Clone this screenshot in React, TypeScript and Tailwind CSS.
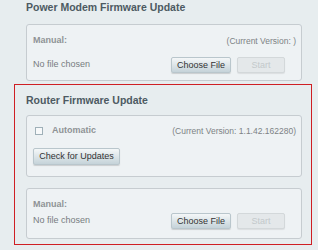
import React from 'react';

const font = { fontFamily: '"Liberation Sans", Arial, sans-serif' };

const Btn: React.FC<{ label: string; disabled?: boolean; className?: string }> = ({ label, disabled, className = '' }) => (
  <button
    className={`h-[16px] rounded-[2px] border text-[9px] leading-none ${
      disabled
        ? 'border-[#d3d8da] bg-[#e4e8ea] text-[#c3c8cb] shadow-[0_1px_1px_rgba(0,0,0,0.08)]'
        : 'border-[#b9c6cc] bg-gradient-to-b from-[#f4f7f8] to-[#c5d3d9] text-[#333] shadow-[0_1px_1px_rgba(0,0,0,0.15)]'
    } ${className}`}
  >
    {label}
  </button>
);

const ManualBox: React.FC<{ version?: string; tight?: boolean }> = ({ version, tight }) => (
  <div className={`rounded-[3px] border border-[#c6ccd0] bg-[#eef2f4] pl-[6px] pr-[5px] ${tight ? 'h-[51px] pt-[10px]' : 'h-[57px] pt-[10px]'}`}>
    <div className="flex items-center justify-between h-[12px]">
      <span className="text-[9px] font-bold text-[#8e9396]">Manual:</span>
      {version !== undefined && <span className="text-[8.5px] text-[#7d8285]">{version}</span>}
    </div>
    <div className={`flex items-center ${tight ? 'mt-[2px]' : 'mt-[10px]'}`}>
      <span className="text-[9px] text-[#777c80]">No file chosen</span>
      <Btn label="Choose File" className="ml-auto w-[60px]" />
      <Btn label="Start" disabled className="ml-[6px] mr-[11px] w-[48px]" />
    </div>
  </div>
);

export default function App() {
  return (
    <div style={font} className="w-[318px] h-[250px] overflow-hidden bg-[#e7edef]">
      <div className="pl-[26px] pr-[16px]">
        <div className="h-[14px] text-[10.5px] font-bold leading-[14px] text-[#4d5a62]">Power Modem Firmware Update</div>
        <div className="mt-[10px]">
          <ManualBox version="(Current Version: )" />
        </div>
      </div>

      <div className="mt-[3px] ml-[14px] w-[298px] h-[161px] border border-[#cf1f24] pl-[11px] pr-[9px]">
        <div className="pt-[8px] h-[14px] box-content text-[10.5px] font-bold leading-[14px] text-[#4d5a62]">Router Firmware Update</div>
        <div className="mt-[8px] h-[62px] rounded-[3px] border border-[#c6ccd0] bg-[#eef2f4] pl-[8px] pr-[5px] pt-[11px]">
          <div className="flex items-center h-[8px]">
            <span className="w-[8px] h-[8px] border border-[#9fb0b8] bg-[#f7f9fa]" />
            <span className="ml-[9px] text-[9px] font-bold text-[#8e9396]">Automatic</span>
            <span className="ml-auto text-[8.5px] text-[#7d8285]">(Current Version: 1.1.42.162280)</span>
          </div>
          <button className="mt-[13px] -ml-[2px] h-[17px] w-[87px] rounded-[2px] border border-[#b9c6cc] bg-gradient-to-b from-[#f4f7f8] to-[#c5d3d9] text-[9px] leading-none text-[#333] shadow-[0_1px_1px_rgba(0,0,0,0.15)]">
            Check for Updates
          </button>
        </div>
        <div className="mt-[11px]">
          <ManualBox tight />
        </div>
      </div>
    </div>
  );
}
